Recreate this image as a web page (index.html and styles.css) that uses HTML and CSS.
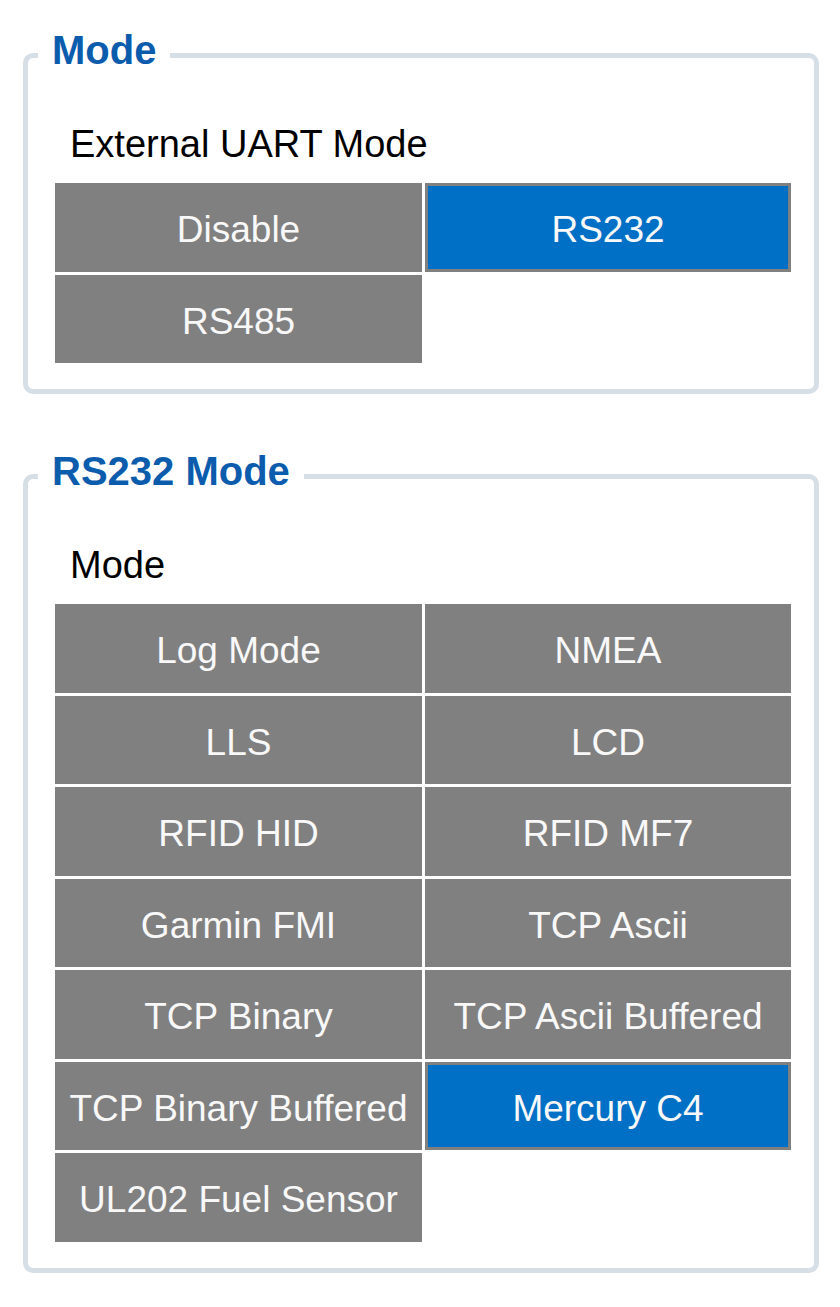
FILE: index.html
```html
<!DOCTYPE html>
<html lang="en">
<head>
    <meta charset="UTF-8">
    <meta name="viewport" content="width=device-width, initial-scale=1.0">
    <title>UART Mode</title>
    <link rel="stylesheet" href="styles.css">
</head>
<body>
    <fieldset class="panel">
        <legend>Mode</legend>
        <div class="label">External UART Mode</div>
        <div class="options">
            <div class="opt">Disable</div>
            <div class="opt on">RS232</div>
            <div class="opt">RS485</div>
        </div>
    </fieldset>

    <fieldset class="panel">
        <legend>RS232 Mode</legend>
        <div class="label">Mode</div>
        <div class="options">
            <div class="opt">Log Mode</div>
            <div class="opt">NMEA</div>
            <div class="opt">LLS</div>
            <div class="opt">LCD</div>
            <div class="opt">RFID HID</div>
            <div class="opt">RFID MF7</div>
            <div class="opt">Garmin FMI</div>
            <div class="opt">TCP Ascii</div>
            <div class="opt">TCP Binary</div>
            <div class="opt">TCP Ascii Buffered</div>
            <div class="opt">TCP Binary Buffered</div>
            <div class="opt on">Mercury C4</div>
            <div class="opt">UL202 Fuel Sensor</div>
        </div>
    </fieldset>
</body>
</html>
```

FILE: styles.css
```css
body {
    margin: 0;
    padding-top: 30px;
    background-color: #ffffff;
    font-family: "Liberation Sans", Arial, sans-serif;
}

.panel {
    box-sizing: border-box;
    width: 796px;
    min-width: 0;
    margin: 0 0 57px 23px;
    padding: 0 23px 26px 27px;
    border: 5px solid #d6dee6;
    border-radius: 10px;
}

.panel legend {
    margin-left: -17px;
    padding: 0 14px 10px;
    font-size: 40px;
    line-height: 40px;
    font-weight: bold;
    color: #0b5cad;
}

.label {
    margin: 42px 0 17px 15px;
    font-size: 38px;
    line-height: 44px;
    color: #000000;
}

.options {
    display: grid;
    grid-template-columns: 367px 366px;
    grid-auto-rows: 88.5px;
    gap: 3px;
}

.opt {
    box-sizing: border-box;
    display: flex;
    justify-content: center;
    align-items: center;
    padding-top: 6px;
    background-color: #808080;
    color: #f8f8f8;
    font-size: 37px;
    white-space: nowrap;
}

.opt.on {
    background-color: #0070c6;
    border: 3px solid #808080;
}
```
